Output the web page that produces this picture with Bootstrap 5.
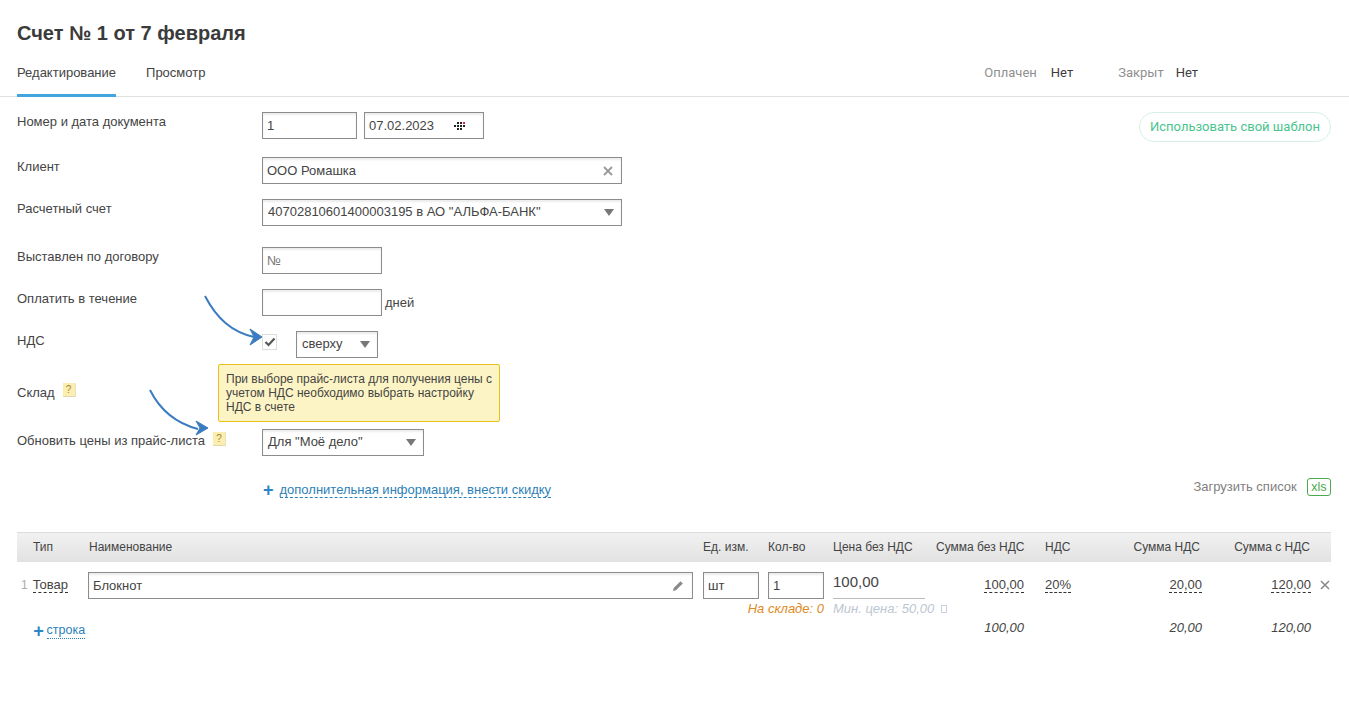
<!DOCTYPE html>
<html lang="ru">
<head>
<meta charset="utf-8">
<title>Счет № 1</title>
<link href="https://cdn.jsdelivr.net/npm/bootstrap@5.3.0/dist/css/bootstrap.min.css" rel="stylesheet">
<style>
body{font-family:"Liberation Sans",Arial,sans-serif;font-size:13px;color:#444;background:#fff;line-height:16px;position:relative;min-height:707px}
.doc-title{font-family:"Liberation Sans",sans-serif;font-weight:700;font-size:20px;line-height:24px;color:#3b3b3b;margin:0;padding:21px 17px 0}
.tabbar{height:52px;border-bottom:1px solid #e1e1e1;padding:0 17px;display:flex;justify-content:space-between}
.tab-item{display:block;color:#444;text-decoration:none;padding-top:20px;height:52px;margin-right:30px}
.tab-item.on{border-bottom:3px solid #42a5dd}
.stat{padding-top:20px;padding-right:134px;display:flex;font-family:Roboto,sans-serif}
.stat-k{color:#8f8f8f;margin-right:14px}
.stat-k.tight{margin-right:12px}
.stat-v{color:#3c3c3c;margin-right:45px}
.stat-v:last-child{margin-right:0}
.frow{display:flex;padding-left:17px;position:relative}
.flabel{width:245px;flex:none;padding-top:2px}
.r1{margin-top:15px;height:27px;justify-content:space-between;padding-right:18px}
.r2{margin-top:18px;height:27px}
.r3{margin-top:15px;height:27px}
.r4{margin-top:21px;height:27px}
.r5{margin-top:15px;height:27px}
.r6{margin-top:15px;height:27px}
.r7{margin-top:26px;height:16px}
.r8{margin-top:29px;height:27px}
.r9{margin-top:26px;height:18px;justify-content:space-between;padding-right:18px}
.fbox{height:27px;border:1px solid #8c8c8c;background:#fff;box-shadow:inset 0 2px 2px rgba(0,0,0,.08);padding:4px;line-height:17px;color:#444;display:flex;align-items:center;justify-content:space-between;flex:none}
.w95{width:95px}.w120a{width:120px}.w360{width:360px}.w82{width:82px}.w162{width:162px}.w605{width:605px}.w56{width:56px}
.ml7{margin-left:7px}
.muted-ph{color:#777}
.sel-text{padding-left:1px;white-space:nowrap;margin-top:-2px}
.tri{width:0;height:0;border-left:5.5px solid transparent;border-right:5.5px solid transparent;border-top:7px solid #777;margin-right:3px}
.tick-box{width:15px;height:16px;border:1px solid #ddd;margin-top:3px;margin-right:19px;display:flex;align-items:center;justify-content:center;flex:none}
.help{display:inline-block;width:13px;height:14px;background:#fbeeb0;border-bottom:1px solid #e2d9a8;border-right:1px solid #e9e2bd;color:#a08a30;font-size:10px;line-height:13px;text-align:center}
.sklad-text{margin-right:8px;padding-top:1px}
.help-a{margin-top:-1px}
.upd-text{padding-top:2px}
.help-b{margin-top:1px;margin-left:8px}
.cal-ico{margin-right:12px}
.days{margin-left:3px;align-self:center}
.hintbox{position:absolute;left:218px;top:364px;width:282px;height:58px;background:#fdf4c5;border:1px solid #e8c11c;border-radius:2px;padding:7px 7px 0;font-size:12px;line-height:14px;color:#444;z-index:3}
.arrow-layer{position:absolute;z-index:4}
.plus{color:#2b86c5;font-weight:700;font-size:18px;line-height:16px}
.more-wrap{display:flex;padding-left:245px}
.more-wrap .plus{margin-right:6px;margin-left:1px}
.dash-blue{color:#2d7fb8;border-bottom:1px dashed #2d7fb8;text-decoration:none;line-height:15px;height:16px;display:inline-block}
.dot-blue{color:#2d7fb8;border-bottom:1px dotted #2d7fb8;text-decoration:none;line-height:15px;height:16px;display:inline-block;font-style:normal;font-size:12.5px;margin-left:3px}
.dash-dark{color:#444;border-bottom:1px dashed #333;text-decoration:none;display:inline-block;line-height:15px}
.load-wrap{display:flex;align-items:center;margin-top:-4px;height:18px}
.load-text{color:#808080}
.xls{border:1px solid #4aaa4e;color:#4aaa4e;border-radius:3px;padding:0 3.5px;height:18px;line-height:16px;margin-left:10px;display:inline-block;font-size:12.5px}
.pill{height:30px;border:1px solid #d6f1e4;border-radius:15px;color:#49c48c;background:#fff;padding:0 10px;line-height:28px;font-size:13px;font-family:Roboto,sans-serif}
.gridline{display:grid;grid-template-columns:71px 615px 65px 65px 103px 109px 65px 100px 101px 20px;margin-left:17px;width:1314px}
.ghead{height:30px;margin-top:32px;padding-bottom:2px;align-items:center;background:linear-gradient(#f1f1f1,#e2e2e2);border-top:1px solid #dcdcdc;font-size:12px;color:#444;white-space:nowrap}
.ghead .pl16{padding-left:16px}
.ghead .pl1{padding-left:1px}
.rt{text-align:right}
.pr21{padding-right:21px}.pr10{padding-right:10px}.pr8{padding-right:8px}.pr9{padding-right:9px}.pr1{padding-right:1px}
.grow1{margin-top:10px;height:27px;align-items:end}
.idx{color:#aaa;padding-left:4px;margin-right:5px;font-size:12px}
.price{border-bottom:1px solid #bbb;width:92px;height:27px;font-size:15px;line-height:20px}
.cellnum{padding-bottom:6px}
.x-del{color:#8a8a8a;padding-bottom:7px;padding-left:9px}
.grow2{height:18px;font-style:italic;align-items:center;margin-top:1px}
.stock{color:#de8a1e;white-space:nowrap;grid-column:3 / 5}
.minp{color:#bcc6d2;white-space:nowrap;grid-column:5 / 7}
.tiny-box{display:inline-block;width:6px;height:8px;border:1px solid #c6d2e0;margin-left:3px}
.grow3{height:24px;font-style:italic}
.total{font-style:italic;color:#444;padding-top:2px}
.addline{display:flex;padding-left:16px;padding-top:5px}
</style>
</head>
<body>
<h1 class="doc-title">Счет № 1 от 7 февраля</h1>
<div class="tabbar">
  <div class="d-flex">
    <a class="tab-item on" href="#">Редактирование</a>
    <a class="tab-item" href="#">Просмотр</a>
  </div>
  <div class="stat">
    <span class="stat-k">Оплачен</span><span class="stat-v">Нет</span>
    <span class="stat-k tight">Закрыт</span><span class="stat-v">Нет</span>
  </div>
</div>

<div class="frow r1">
  <div class="d-flex">
    <div class="flabel">Номер и дата документа</div>
    <div class="fbox w95">1</div>
    <div class="fbox w120a ml7">07.02.2023
      <svg width="13" height="8" viewBox="0 0 13 8" class="cal-ico"><g fill="#222"><rect x="0" y="3" width="2" height="2"/><rect x="3" y="0" width="2" height="2"/><rect x="3" y="3" width="2" height="2"/><rect x="3" y="6" width="2" height="2"/><rect x="6" y="0" width="2" height="2"/><rect x="6" y="3" width="2" height="2"/><rect x="6" y="6" width="2" height="2"/><rect x="9" y="3" width="2" height="2"/></g><rect x="9" y="0" width="2" height="2" fill="#e0223a"/></svg>
    </div>
  </div>
  <div class="pill">Использовать свой шаблон</div>
</div>
<div class="frow r2">
  <div class="flabel">Клиент</div>
  <div class="fbox w360">ООО Ромашка
    <svg width="10" height="10" viewBox="0 0 10 10" class="me-1"><path d="M1 1l8 8M9 1l-8 8" stroke="#999" stroke-width="1.8" fill="none"/></svg>
  </div>
</div>
<div class="frow r3">
  <div class="flabel">Расчетный счет</div>
  <div class="fbox w360"><span class="sel-text">40702810601400003195 в АО "АЛЬФА-БАНК"</span><span class="tri"></span></div>
</div>
<div class="frow r4">
  <div class="flabel">Выставлен по договору</div>
  <div class="fbox w120a muted-ph">№</div>
</div>
<div class="frow r5">
  <div class="flabel">Оплатить в течение</div>
  <div class="fbox w120a"></div>
  <span class="days">дней</span>
</div>
<div class="frow r6">
  <div class="flabel">НДС</div>
  <div class="tick-box"><svg width="12" height="10" viewBox="0 0 12 10"><path d="M1.5 5l3 3L10.5 1.5" stroke="#555" stroke-width="2.2" fill="none"/></svg></div>
  <div class="fbox w82"><span class="sel-text">сверху</span><span class="tri"></span></div>
</div>
<div class="frow r7">
  <span class="sklad-text">Склад</span><span class="help help-a">?</span>
</div>
<div class="frow r8">
  <div class="flabel d-flex"><span class="upd-text">Обновить цены из прайс-листа</span><span class="help help-b">?</span></div>
  <div class="fbox w162"><span class="sel-text">Для "Моё дело"</span><span class="tri"></span></div>
</div>
<div class="frow r9">
  <div class="more-wrap">
    <span class="plus">+</span><a class="dash-blue" href="#">дополнительная информация, внести скидку</a>
  </div>
  <div class="load-wrap"><span class="load-text">Загрузить список</span><span class="xls">xls</span></div>
</div>

<div class="gridline ghead">
  <div class="pl16">Тип</div><div class="pl1">Наименование</div><div>Ед. изм.</div><div>Кол-во</div><div>Цена без НДС</div>
  <div class="rt pr21">Сумма без НДС</div><div>НДС</div><div class="rt pr10">Сумма НДС</div><div class="rt pr1">Сумма с НДС</div><div></div>
</div>
<div class="gridline grow1">
  <div class="cellnum"><span class="idx">1</span><span class="dash-dark">Товар</span></div>
  <div class="fbox w605">Блокнот
    <svg width="12" height="12" viewBox="0 0 12 12" class="me-1"><path d="M1 11l.7-3L8.5 1.2l2.3 2.3L4 10.3z" fill="#8a8a8a"/></svg>
  </div>
  <div class="fbox w56">шт</div>
  <div class="fbox w56">1</div>
  <div class="price">100,00</div>
  <div class="rt pr21 cellnum"><span class="dash-dark">100,00</span></div>
  <div class="cellnum"><span class="dash-dark">20%</span></div>
  <div class="rt pr8 cellnum"><span class="dash-dark">20,00</span></div>
  <div class="rt cellnum"><span class="dash-dark">120,00</span></div>
  <div class="x-del"><svg width="10" height="10" viewBox="0 0 10 10"><path d="M1 1l8 8M9 1l-8 8" stroke="#8a8a8a" stroke-width="1.6" fill="none"/></svg></div>
</div>
<div class="gridline grow2">
  <div class="rt stock pr9">На складе: 0</div>
  <div class="minp">Мин. цена: 50,00 <span class="tiny-box"></span></div>
</div>
<div class="gridline grow3">
  <div class="addline"><span class="plus">+</span><a class="dot-blue" href="#">строка</a></div>
  <div></div><div></div><div></div><div></div>
  <div class="rt pr21 total">100,00</div><div></div>
  <div class="rt pr8 total">20,00</div>
  <div class="rt total">120,00</div>
</div>

<div class="hintbox">При выборе прайс-листа для получения цены с учетом НДС необходимо выбрать настройку НДС в счете</div>

<svg class="arrow-layer top-0 start-0" width="300" height="450" viewBox="0 0 300 450">
  <path d="M205 296C217 319 232 332 254 337" fill="none" stroke="#3a7cbf" stroke-width="2"/>
  <path d="M250 329L262 337L250 345L254 337z" fill="#3a7cbf" stroke="#3a7cbf"/>
  <path d="M150 390C160 410 175 423 198 429" fill="none" stroke="#3a7cbf" stroke-width="2"/>
  <path d="M196 421L208 428L196 435L200 428z" fill="#3a7cbf" stroke="#3a7cbf"/>
</svg>
</body>
</html>
